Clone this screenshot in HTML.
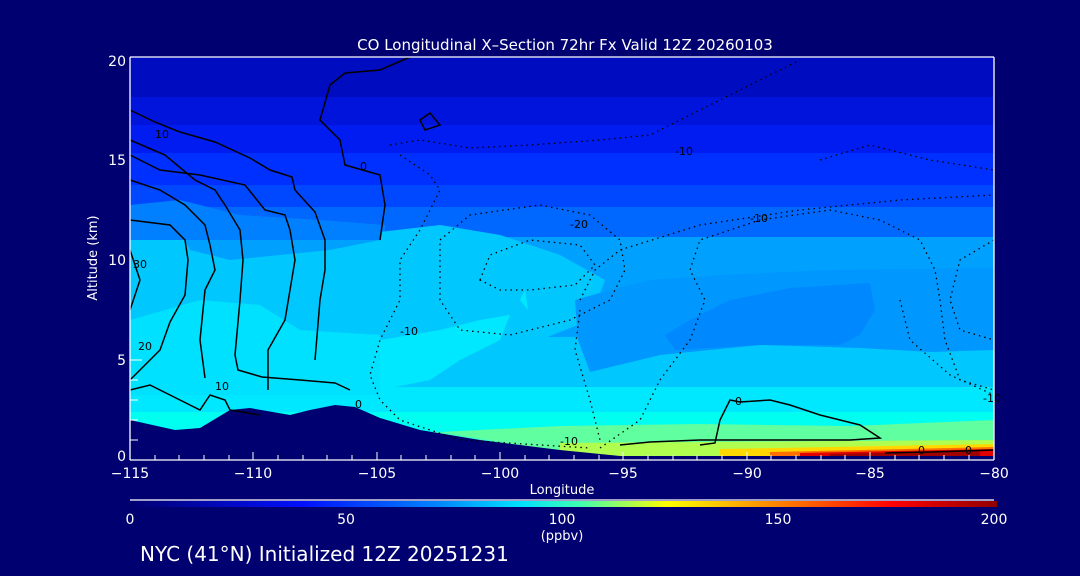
<!DOCTYPE html>
<html><head><meta charset="utf-8"><style>
html,body{margin:0;padding:0;background:#000070;}
body{width:1080px;height:576px;overflow:hidden;position:relative;font-family:"Liberation Sans",sans-serif;color:#fff;}
</style></head><body>
<svg width="1080" height="576" style="position:absolute;left:0;top:0" font-family="DejaVu Sans, Liberation Sans, sans-serif">
<defs>
<linearGradient id="cb" x1="0" y1="0" x2="1" y2="0">
<stop offset="0" stop-color="#000070"/>
<stop offset="0.2" stop-color="#0010ff"/>
<stop offset="0.35" stop-color="#0080ff"/>
<stop offset="0.45" stop-color="#00e0ff"/>
<stop offset="0.52" stop-color="#40ffb0"/>
<stop offset="0.62" stop-color="#ffff00"/>
<stop offset="0.75" stop-color="#ff8000"/>
<stop offset="0.88" stop-color="#ff0000"/>
<stop offset="1" stop-color="#900000"/>
</linearGradient>
</defs>
<rect x="130" y="57" width="864" height="40" fill="#000cc0"/>
<rect x="130" y="97" width="864" height="28" fill="#0014dc"/>
<rect x="130" y="125" width="864" height="28" fill="#001cf0"/>
<rect x="130" y="153" width="864" height="32" fill="#0030ff"/>
<rect x="130" y="185" width="864" height="22" fill="#0048ff"/>
<rect x="130" y="207" width="864" height="30" fill="#0068ff"/>
<rect x="130" y="237" width="864" height="100" fill="#00a0ff"/>
<rect x="130" y="337" width="864" height="50" fill="#00c8ff"/>
<rect x="130" y="387" width="864" height="25" fill="#00e8ff"/>
<rect x="130" y="412" width="864" height="20" fill="#00fff0"/>
<rect x="130" y="432" width="864" height="14" fill="#40ffc0"/>
<rect x="130" y="446" width="864" height="14" fill="#90ff70"/>
<path d="M130 225 L175 222 L190 250 L230 260 L280 255 L330 250 L380 240 L380 340 L130 340 Z" fill="#00c8ff"/>
<path d="M130 320 L200 300 L260 305 L300 330 L380 335 L380 395 L130 395 Z" fill="#00e0ff"/>
<path d="M130 205 L180 200 L240 215 L320 220 L385 225 L385 240 L130 240 Z" fill="#0080ff"/>
<path d="M380 232 L440 225 L500 235 L560 255 L605 280 L590 320 L540 340 L500 360 L380 350 Z" fill="#00c8ff"/>
<path d="M380 340 L440 330 L480 320 L510 315 L500 340 L460 360 L430 380 L380 390 Z" fill="#00e8ff"/>
<path d="M520 300 L525 290 L528 310 Z" fill="#00e8ff"/>
<path d="M575 300 L610 290 L650 280 L720 275 L830 270 L994 268 L994 350 L930 352 L860 348 L760 345 L660 355 L590 372 L578 340 Z" fill="#0098ff"/>
<path d="M665 335 L690 320 L730 300 L790 288 L870 283 L875 310 L860 335 L840 345 L760 345 L675 350 Z" fill="#0088ff"/>
<path d="M440 432 L560 426 L700 424 L850 426 L994 420 L994 455 L580 455 Z" fill="#60ffa0"/>
<path d="M560 443 L994 440 L994 456 L560 456 Z" fill="#b0ff50"/>
<path d="M720 449 L994 444 L994 456 L720 456 Z" fill="#ffd800"/>
<path d="M770 452 L994 447 L994 456 L770 456 Z" fill="#ff7000"/>
<path d="M800 453 L994 449 L994 456 L800 456 Z" fill="#e00000"/>
<path d="M830 454 L980 451 L980 456 L830 456 Z" fill="#a00000"/>
<path d="M130 420 L175 430 L200 428 L230 410 L250 408 L290 415 L310 410 L335 405 L355 407 L380 418 L420 430 L480 440 L560 450 L620 456 L994 456 L994 460 L130 460 Z" fill="#000070"/>
<g fill="none" stroke="#000" stroke-width="1.5">
<path d="M130 110 L155 122 L180 132 L215 142 L250 158 L270 170 L292 177 L295 190 L315 212 L325 240 L325 270 L320 300 L315 360"/>
<path d="M130 155 L160 170 L200 175 L245 185 L265 210 L285 215 L290 230 L295 260 L290 290 L285 320 L268 350 L268 390"/>
<path d="M130 140 L165 155 L195 180 L215 190 L225 205 L240 230 L243 260 L240 300 L235 355 L238 370 L262 377 L300 380 L335 383 L350 390"/>
<path d="M130 180 L160 190 L185 205 L205 225 L210 245 L215 270 L205 290 L200 340 L205 378"/>
<path d="M130 220 L170 225 L185 240 L188 260 L185 295 L170 322 L160 350 L130 380"/>
<path d="M130 250 L140 280 L130 310"/>
<path d="M130 390 L150 385 L180 400 L200 410 L210 395 L225 400 L230 410 L260 415"/>
<path d="M345 73 L330 85 L320 120 L340 140 L345 165 L380 175 L385 205 L380 240"/>
<path d="M345 73 L380 70 L410 57"/>
<path d="M420 120 L430 113 L440 125 L425 130 Z"/>
<path d="M620 445 L650 442 L700 440 L745 440 L800 440 L850 440 L880 438 L860 425 L820 415 L790 405 L770 400 L740 402 L730 400 L720 420 L715 443 L700 445"/>
<path d="M885 453 L930 452 L994 450"/>
</g>
<g fill="none" stroke="#000" stroke-width="1.3" stroke-dasharray="1.5 4">
<path d="M390 145 L420 140 L470 148 L530 145 L600 140 L650 135 L700 110 L760 80 L800 60"/>
<path d="M400 155 L430 175 L440 190 L420 230 L400 260 L400 300 L380 340 L370 375 L380 400 L400 420 L460 440 L540 445 L590 448"/>
<path d="M440 240 L470 215 L540 205 L590 215 L620 240 L625 270 L610 300 L570 320 L510 335 L460 330 L440 300 Z"/>
<path d="M480 280 L490 255 L530 240 L580 245 L595 265 L575 285 L530 290 L500 290 Z"/>
<path d="M600 448 L640 420 L660 380 L690 340 L705 300 L690 270 L700 240 L760 220 L830 210 L880 220 L920 240 L935 270 L940 300 L945 340 L960 380 L994 390"/>
<path d="M580 300 L595 270 L620 250 L700 225 L800 210 L900 200 L994 195"/>
<path d="M820 160 L870 145 L930 160 L994 170"/>
<path d="M900 300 L910 340 L950 375 L994 395"/>
<path d="M994 240 L960 260 L950 300 L960 330 L994 340"/>
<path d="M580 310 L575 350 L590 400 L600 440"/>
</g>
<g font-size="11" fill="#000">
<text x="360" y="170">0</text><text x="133" y="268">30</text><text x="138" y="350">20</text>
<text x="215" y="390">10</text><text x="355" y="408">0</text><text x="400" y="335">-10</text>
<text x="570" y="228">-20</text><text x="750" y="222">-10</text><text x="675" y="155">-10</text>
<text x="735" y="405">0</text><text x="560" y="445">-10</text><text x="918" y="454">0</text><text x="965" y="454">0</text><text x="983" y="402">-10</text>
<text x="155" y="138">10</text>
</g>
<g stroke="#fff" stroke-width="1.3" fill="none">
<line x1="130" y1="57" x2="994" y2="57"/>
<line x1="994" y1="57" x2="994" y2="460"/>
<line x1="130" y1="460" x2="994" y2="460"/>
<line x1="130" y1="57" x2="130" y2="460"/>
</g>
<g stroke="#fff" stroke-width="1">
<path d="M130 460v-8M155 460v-5M179 460v-5M204 460v-5M229 460v-5M253 460v-8M278 460v-5M303 460v-5M327 460v-5M352 460v-5M377 460v-8M401 460v-5M426 460v-5M451 460v-5M475 460v-5M500 460v-8M525 460v-5M549 460v-5M574 460v-5M599 460v-5M623 460v-8M648 460v-5M673 460v-5M697 460v-5M722 460v-5M747 460v-8M771 460v-5M796 460v-5M821 460v-5M845 460v-5M870 460v-8M895 460v-5M919 460v-5M944 460v-5M969 460v-5"/>
<path d="M130 440h8M130 420h8M130 400h8M130 380h8M130 360h12"/>
</g>
<g fill="#fff" font-size="14">
<text x="565" y="50" text-anchor="middle" font-size="15">CO Longitudinal X–Section 72hr  Fx Valid 12Z 20260103</text>
<text x="126" y="66" text-anchor="end">20</text>
<text x="126" y="165" text-anchor="end">15</text>
<text x="126" y="265" text-anchor="end">10</text>
<text x="126" y="365" text-anchor="end">5</text>
<text x="126" y="461" text-anchor="end">0</text>
<text x="130" y="478" text-anchor="middle">−115</text>
<text x="253" y="478" text-anchor="middle">−110</text>
<text x="377" y="478" text-anchor="middle">−105</text>
<text x="500" y="478" text-anchor="middle">−100</text>
<text x="623" y="478" text-anchor="middle">−95</text>
<text x="747" y="478" text-anchor="middle">−90</text>
<text x="870" y="478" text-anchor="middle">−85</text>
<text x="994" y="478" text-anchor="middle">−80</text>
<text x="562" y="494" text-anchor="middle" font-size="13">Longitude</text>
<text transform="translate(97 258) rotate(-90)" text-anchor="middle" font-size="13">Altitude (km)</text>
<text x="130" y="524" text-anchor="middle">0</text>
<text x="346" y="524" text-anchor="middle">50</text>
<text x="562" y="524" text-anchor="middle">100</text>
<text x="778" y="524" text-anchor="middle">150</text>
<text x="994" y="524" text-anchor="middle">200</text>
<text x="562" y="540" text-anchor="middle" font-size="13">(ppbv)</text>
<text x="140" y="561" font-size="20">NYC (41°N) Initialized 12Z 20251231</text>
</g>
<line x1="130" y1="500" x2="994" y2="500" stroke="#fff" stroke-width="1.3"/>
<rect x="130" y="501" width="867" height="6" fill="url(#cb)"/>
</svg>
</body></html>
